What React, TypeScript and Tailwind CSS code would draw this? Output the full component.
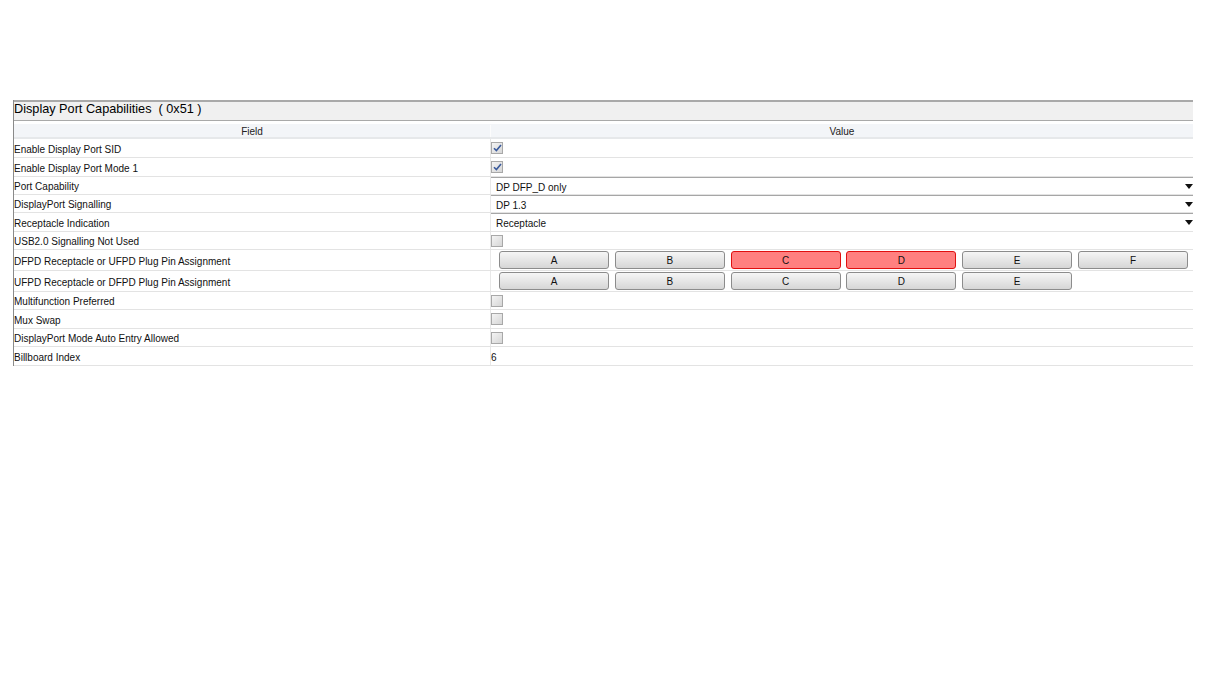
import React from 'react';

type Row =
    | { label: string; h: string; kind: 'check'; checked: boolean }
    | { label: string; h: string; kind: 'select'; value: string }
    | { label: string; h: string; kind: 'pins'; pins: string[]; selected: string[] }
    | { label: string; h: string; kind: 'text'; value: string };

const rows: Row[] = [
    { label: 'Enable Display Port SID', h: 'h-[19px]', kind: 'check', checked: true },
    { label: 'Enable Display Port Mode 1', h: 'h-[19px]', kind: 'check', checked: true },
    { label: 'Port Capability', h: 'h-[18px]', kind: 'select', value: 'DP DFP_D only' },
    { label: 'DisplayPort Signalling', h: 'h-[18px]', kind: 'select', value: 'DP 1.3' },
    { label: 'Receptacle Indication', h: 'h-[19px]', kind: 'select', value: 'Receptacle' },
    { label: 'USB2.0 Signalling Not Used', h: 'h-[18px]', kind: 'check', checked: false },
    { label: 'DFPD Receptacle or UFPD Plug Pin Assignment', h: 'h-[21px]', kind: 'pins', pins: ['A', 'B', 'C', 'D', 'E', 'F'], selected: ['C', 'D'] },
    { label: 'UFPD Receptacle or DFPD Plug Pin Assignment', h: 'h-[21px]', kind: 'pins', pins: ['A', 'B', 'C', 'D', 'E'], selected: [] },
    { label: 'Multifunction Preferred', h: 'h-[18px]', kind: 'check', checked: false },
    { label: 'Mux Swap', h: 'h-[19px]', kind: 'check', checked: false },
    { label: 'DisplayPort Mode Auto Entry Allowed', h: 'h-[18px]', kind: 'check', checked: false },
    { label: 'Billboard Index', h: 'h-[19px]', kind: 'text', value: '6' },
];

const CheckBox = ({ checked }: { checked: boolean }) => (
    <div className="w-[12px] h-[12px] border border-[#a8a8a8] bg-gradient-to-br from-[#f4f4f4] to-[#d6d6d6] flex items-center justify-center">
        {checked && (
            <svg width="9" height="8" viewBox="0 0 9 8">
                <path d="M1 4.2 L3.4 6.6 L8 1" fill="none" stroke="#3a5a9c" strokeWidth="1.6" />
            </svg>
        )}
    </div>
);

const ValueCell = ({ row }: { row: Row }) => {
    if (row.kind === 'check') {
        return (
            <div className="h-full flex items-center">
                <CheckBox checked={row.checked} />
            </div>
        );
    }
    if (row.kind === 'select') {
        return (
            <div className="h-full flex items-center border-t border-[#a6a6a6] bg-white pl-[5px] pt-[2px]">
                <span className="flex-1">{row.value}</span>
                <svg width="8" height="5" viewBox="0 0 8 5" className="-mt-[2px]">
                    <path d="M0 0 H8 L4 5 Z" fill="#111" />
                </svg>
            </div>
        );
    }
    if (row.kind === 'pins') {
        return (
            <div className="h-full flex items-center gap-[5.8px] pl-[8px]">
                {row.pins.map((p) => {
                    const on = row.selected.includes(p);
                    return (
                        <div
                            key={p}
                            className={`w-[110px] h-[18px] rounded-[3px] border flex items-center justify-center pt-px ${
                                on
                                    ? 'bg-[#ff8080] border-[#e01010]'
                                    : 'bg-gradient-to-b from-[#f6f6f6] to-[#d6d6d6] border-[#8c8c8c]'
                            }`}
                        >
                            {p}
                        </div>
                    );
                })}
            </div>
        );
    }
    return <div className="h-full flex items-center pt-[2px]">{row.value}</div>;
};

const App = () => {
    return (
        <div className="w-[1230px] h-[691px] bg-white text-[10px] text-[#111] font-['Liberation_Sans',Arial,sans-serif]">
            <div className="pt-[100px] pl-[13px]">
                <div className="w-[1180px] border-l border-[#8a8a8a]">
                    {/* Title bar */}
                    <div className="h-[21px] bg-[#f0f0f0] border-t-2 border-b border-[#a9a9a9] flex items-center pb-[2px] text-[12.7px] text-black">
                        Display Port Capabilities&nbsp;&nbsp;( 0x51 )
                    </div>

                    {/* Header */}
                    <div className="h-[18px] flex bg-[#f3f5f8] border-t-[3px] border-t-white border-b-2 border-b-[#e6e8ea] pt-px text-[#222]">
                        <div className="w-[476px] flex items-center justify-center">Field</div>
                        <div className="flex-1 flex items-center justify-center border-l border-[#fcfcfc]">Value</div>
                    </div>

                    {rows.map((row) => (
                        <div key={row.label} className={`${row.h} flex border-b border-[#e3e3e3]`}>
                            <div className="w-[476px] flex items-center pt-[2px]">{row.label}</div>
                            <div className="flex-1 border-l border-[#e8e8e8] min-w-0">
                                <ValueCell row={row} />
                            </div>
                        </div>
                    ))}
                </div>
            </div>
        </div>
    );
};

export default App;
